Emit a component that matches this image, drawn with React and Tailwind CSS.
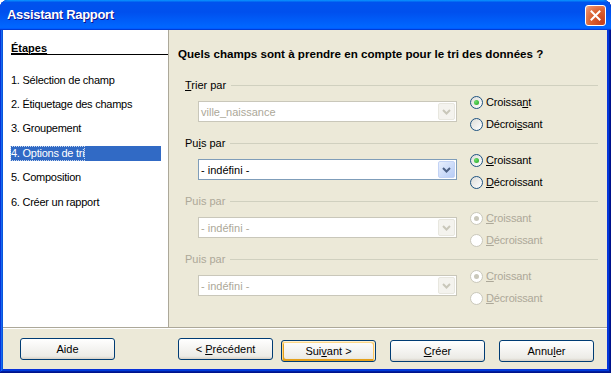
import React from 'react';

const FONT = "font-['Liberation_Sans',Arial,sans-serif]";

const steps = [
  '1. Sélection de champ',
  '2. Étiquetage des champs',
  '3. Groupement',
  '4. Options de tri',
  '5. Composition',
  '6. Créer un rapport',
];

const groups = [
  {
    label: ['', 'T', 'rier par'],
    labelDisabled: false,
    value: 'ville_naissance',
    comboDisabled: true,
    radioDisabled: false,
    asc: ['Croissa', 'n', 't'],
    desc: ['Décroi', 's', 'sant'],
  },
  {
    label: ['Pu', 'i', 's par'],
    labelDisabled: false,
    value: '- indéfini -',
    comboDisabled: false,
    radioDisabled: false,
    asc: ['', 'C', 'roissant'],
    desc: ['', 'D', 'écroissant'],
  },
  {
    label: ['Puis par', '', ''],
    labelDisabled: true,
    value: '- indéfini -',
    comboDisabled: true,
    radioDisabled: true,
    asc: ['', 'C', 'roissant'],
    desc: ['', 'D', 'écroissant'],
  },
  {
    label: ['Puis par', '', ''],
    labelDisabled: true,
    value: '- indéfini -',
    comboDisabled: true,
    radioDisabled: true,
    asc: ['', 'C', 'roissant'],
    desc: ['', 'D', 'écroissant'],
  },
];

function Mnemonic({ parts }) {
  const [pre, key, post] = parts;
  return (
    <>
      {pre}
      {key ? <u className="underline-offset-[1px]">{key}</u> : null}
      {post}
    </>
  );
}

function Radio({ checked, disabled, parts }) {
  return (
    <div className="flex h-[16px] items-center">
      <div
        className={`flex h-[13px] w-[13px] shrink-0 items-center justify-center rounded-full border ${
          disabled
            ? 'border-[#CAC8BB] bg-white'
            : 'border-[#1D5281] bg-[linear-gradient(135deg,#DCDCD7,#FFFFFF)]'
        }`}
      >
        {checked ? (
          <div
            className={`h-[5px] w-[5px] rounded-full ${
              disabled ? 'bg-[#CAC8BB]' : 'bg-[radial-gradient(circle_at_35%_35%,#6BE06B,#21A121)]'
            }`}
          />
        ) : null}
      </div>
      <span className={`ml-[3px] text-[11px] leading-[14px] tracking-[-0.15px] ${disabled ? 'text-[#ACA899]' : 'text-black'}`}>
        <Mnemonic parts={parts} />
      </span>
    </div>
  );
}

function Combo({ value, disabled }) {
  return (
    <div
      className={`flex h-[21px] w-[259px] shrink-0 items-center justify-between border bg-white ${
        disabled ? 'border-[#C9C7BA]' : 'border-[#7F9DB9]'
      }`}
    >
      <span className={`pl-[2px] text-[11px] leading-[14px] ${disabled ? 'text-[#ACA899]' : 'text-black'}`}>
        {value}
      </span>
      <div
        className={`m-px flex h-[17px] w-[17px] items-center justify-center rounded-[2px] border ${
          disabled
            ? 'border-[#E8E7DF] bg-[#F4F3EE]'
            : 'border-[#C3D3F5] bg-[linear-gradient(135deg,#E8EFFD,#B6CCF6)]'
        }`}
      >
        <svg width="9" height="6" viewBox="0 0 9 6">
          <polyline
            points="1,1 4.5,4.5 8,1"
            fill="none"
            stroke={disabled ? '#C9C7BA' : '#4D6185'}
            strokeWidth="2"
          />
        </svg>
      </div>
    </div>
  );
}

function SortGroup({ group }) {
  return (
    <div className="flex h-[58px] shrink-0 flex-col">
      <div className="flex h-[14px] items-center">
        <span className={`text-[11px] leading-[14px] ${group.labelDisabled ? 'text-[#ACA899]' : 'text-black'}`}>
          <Mnemonic parts={group.label} />
        </span>
        <div className="ml-[5px] h-px flex-1 bg-[#D0D0BF]" />
      </div>
      <div className="ml-[13px] flex">
        <div className="mt-[9px]">
          <Combo value={group.value} disabled={group.comboDisabled} />
        </div>
        <div className="ml-[13px] mt-[2px] flex flex-col gap-[6px]">
          <Radio checked disabled={group.radioDisabled} parts={group.asc} />
          <Radio checked={false} disabled={group.radioDisabled} parts={group.desc} />
        </div>
      </div>
    </div>
  );
}

function XpButton({ children, isDefault }) {
  return (
    <button
      type="button"
      className={`h-[22px] w-[95px] rounded-[3px] border border-[#003C74] bg-[linear-gradient(180deg,#FFFFFF,#ECEBE6_86%,#D6D0C5)] text-[11px] leading-[14px] text-black ${
        isDefault
          ? 'shadow-[inset_-1px_1px_#FFF0CF,inset_1px_2px_#FDD889,inset_-2px_2px_#FBC761,inset_2px_-2px_#E5A01A]'
          : ''
      }`}
    >
      {children}
    </button>
  );
}

export default function App() {
  return (
    <div className={`h-[373px] w-[611px] bg-white ${FONT}`}>
      <div className="flex h-full w-full flex-col overflow-hidden rounded-t-[8px] bg-[#0831D9] shadow-[inset_-1px_-1px_#00138C,inset_1px_1px_#0831D9,inset_-2px_-2px_#001EA0,inset_2px_2px_#166AEE,inset_-3px_-3px_#003BDA,inset_3px_3px_#0855DD]">
        {/* title bar */}
        <div className="flex h-[30px] shrink-0 items-center justify-between bg-[linear-gradient(180deg,#0997FF,#0053EE_8%,#0050EE_40%,#0066FF_88%,#0066FF_93%,#005BFF_95%,#003DD7_96%,#003DD7)] pl-[7px] pr-[5px]">
          <span className="text-[13px] font-bold tracking-[-0.3px] text-white [text-shadow:1px_1px_#0F1089]">
            Assistant Rapport
          </span>
          <div className="flex h-[21px] w-[21px] items-center justify-center rounded-[3px] border border-white bg-[radial-gradient(circle_at_85%_85%,#C5401C_0%,#D9602F_50%,#E88A66_85%,#F4B9A2_100%)]">
            <svg width="11" height="11" viewBox="0 0 11 11">
              <path d="M1.5 1.5 L9.5 9.5 M9.5 1.5 L1.5 9.5" stroke="white" strokeWidth="2" strokeLinecap="square" />
            </svg>
          </div>
        </div>

        <div className="flex min-h-0 flex-1 flex-col pb-[4px] pl-[3px] pr-[4px]">
          {/* main body */}
          <div className="flex h-[297px] shrink-0">
            <div className="flex w-[166px] shrink-0 flex-col border-r border-[#ACA899] bg-white pl-[8px]">
              <div className="mt-[12px] border-b border-black text-[11px] font-bold leading-[12px] text-black">
                <span className="underline underline-offset-[1px]">Étapes</span>
              </div>
              <div className="mt-[13px] flex flex-col pr-[7px]">
                {steps.map((step, i) => (
                  <div key={step} className="flex h-[24.4px] items-center">
                    {i === 3 ? (
                      <div className="flex h-[15px] w-full items-center bg-[#316AC5] text-[11px] leading-[13px] tracking-[-0.25px] text-white">
                        <span className="outline outline-1 outline-dotted outline-[#C8D8F0]">{step}</span>
                      </div>
                    ) : (
                      <span className="text-[11px] leading-[13px] tracking-[-0.25px] text-black">{step}</span>
                    )}
                  </div>
                ))}
              </div>
            </div>

            <div className="flex min-w-0 flex-1 flex-col bg-[#ECE9D8]">
              <div className="pl-[9px] pt-[17px] text-[11.6px] font-bold leading-[13px] text-black">
                Quels champs sont à prendre en compte pour le tri des données ?
              </div>
              <div className="mt-[18px] flex flex-col pl-[16px] pr-[9px]">
                {groups.map((g, i) => (
                  <SortGroup key={i} group={g} />
                ))}
              </div>
            </div>
          </div>

          {/* separator */}
          <div className="h-px shrink-0 bg-[#ACA899]" />
          <div className="h-px shrink-0 bg-white" />

          {/* buttons */}
          <div className="flex min-h-0 flex-1 items-start bg-[#ECE9D8] pl-[17px] pt-[9px]">
            <XpButton>Aide</XpButton>
            <div className="ml-[63px] flex">
              <XpButton>
                &lt; <u>P</u>récédent
              </XpButton>
              <div className="ml-[8px]">
                <XpButton isDefault>
                  Sui<u>v</u>ant &gt;
                </XpButton>
              </div>
              <div className="ml-[14px]">
                <XpButton>
                  <u>C</u>réer
                </XpButton>
              </div>
              <div className="ml-[14px]">
                <XpButton>
                  Annu<u>l</u>er
                </XpButton>
              </div>
            </div>
          </div>
        </div>
      </div>
    </div>
  );
}
